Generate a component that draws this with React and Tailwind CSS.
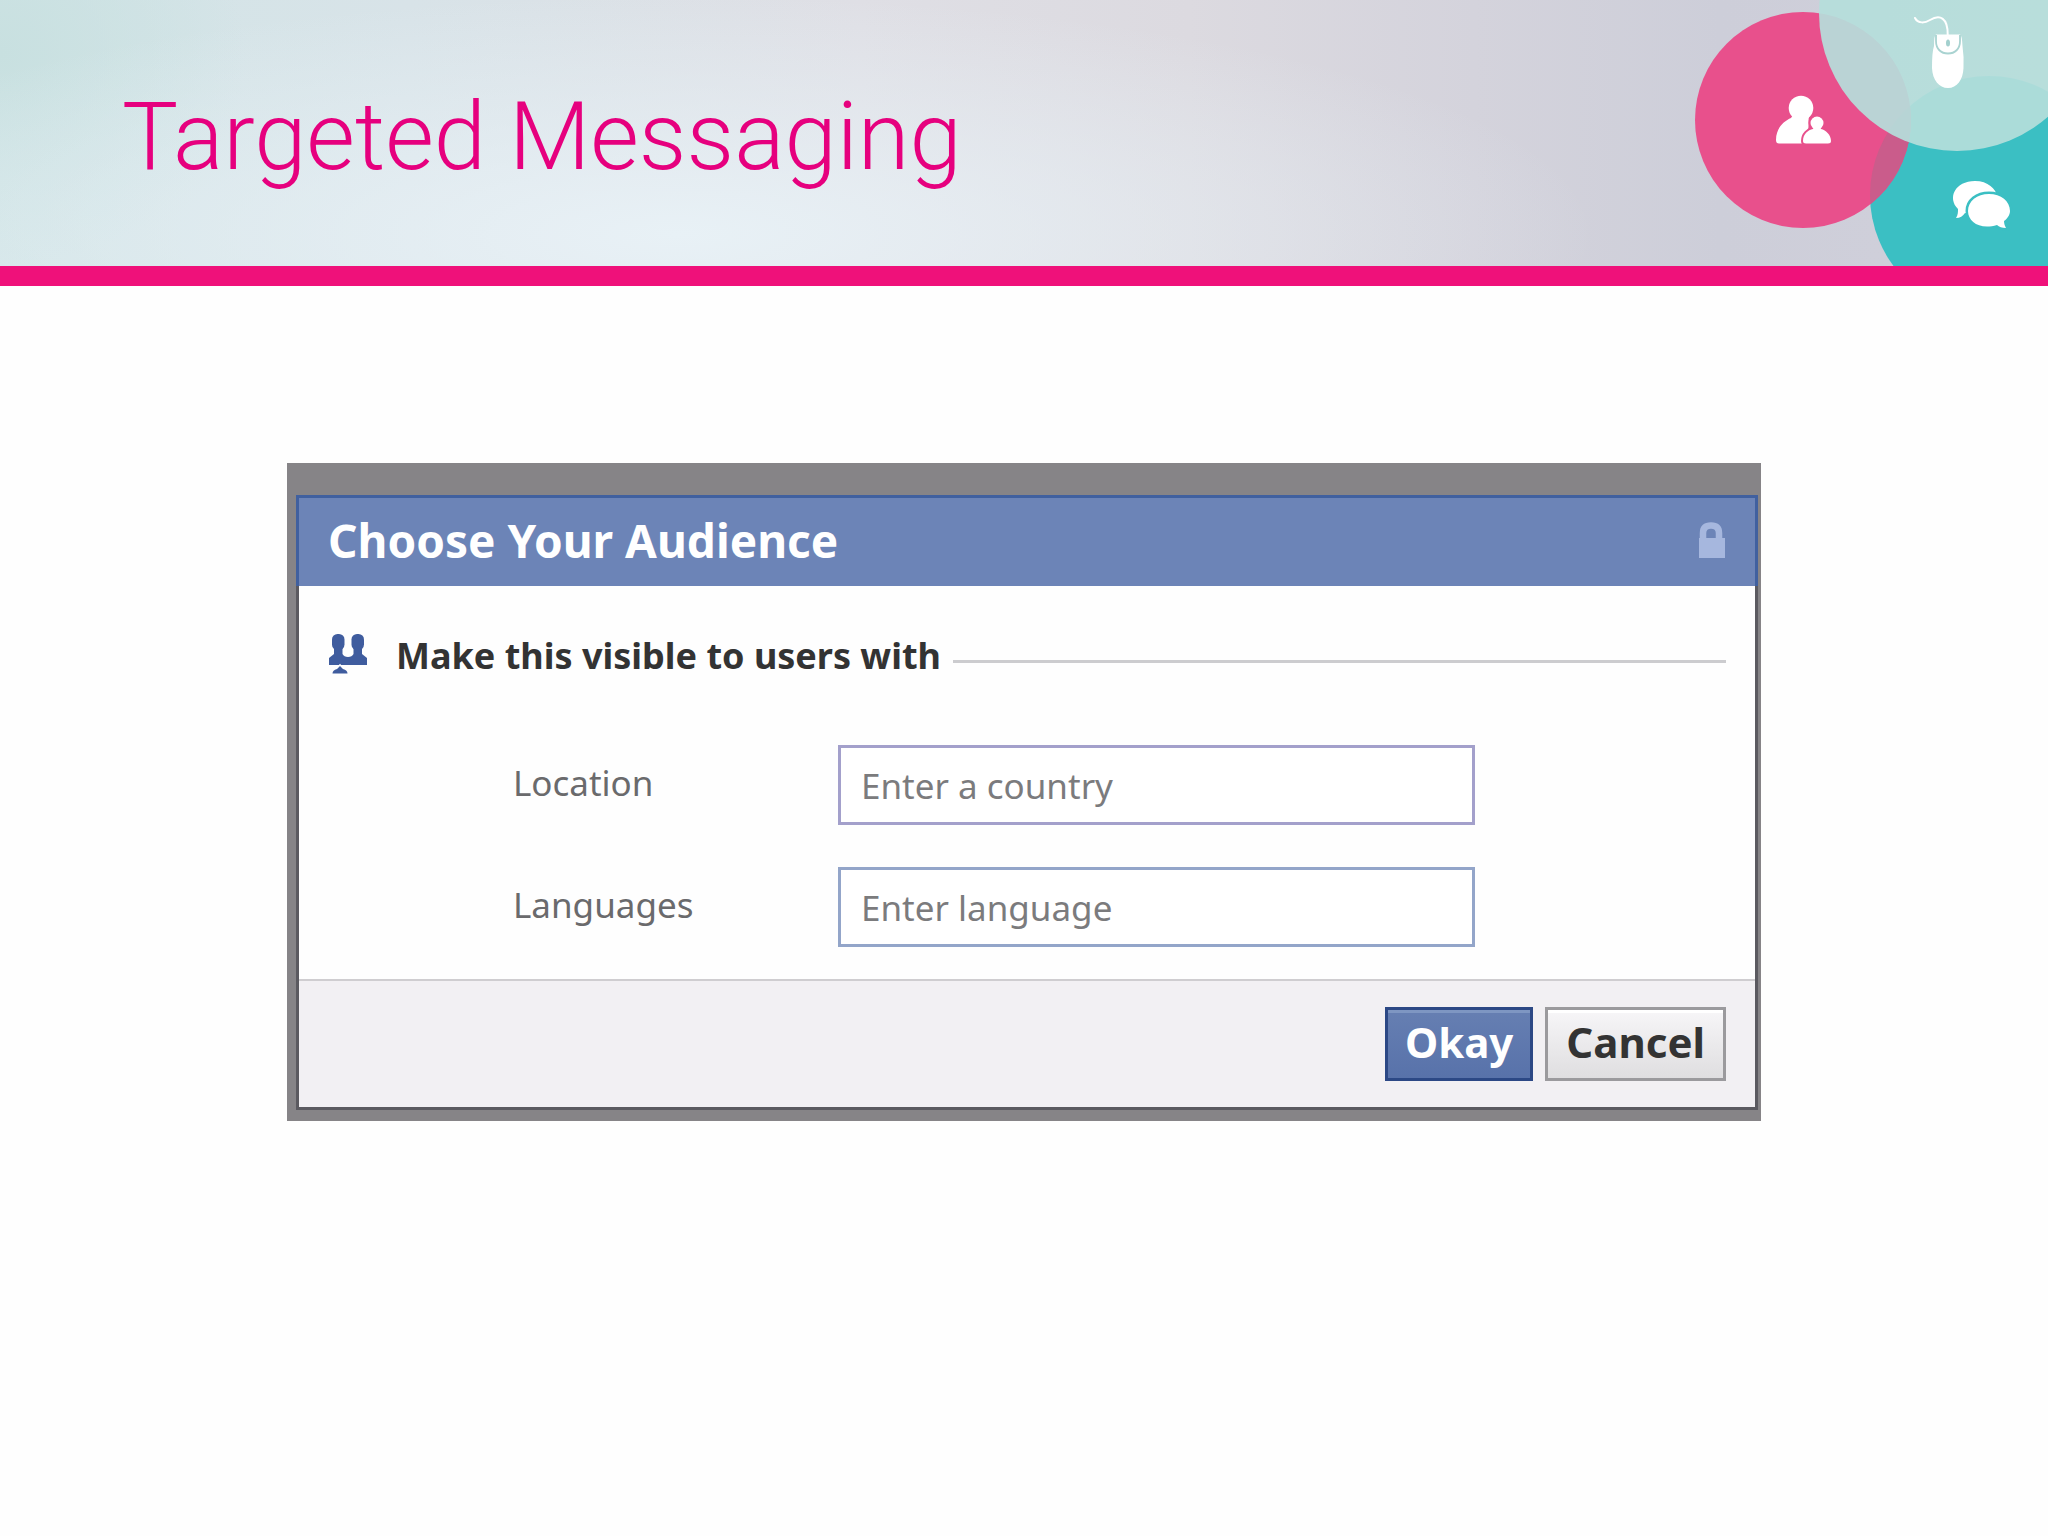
const fields = [
  { id: 'location', label: 'Location', placeholder: 'Enter a country', border: 'border-[#a3a0cb]' },
  { id: 'languages', label: 'Languages', placeholder: 'Enter language', border: 'border-[#93a5c9]' },
];

function HeaderArt() {
  return (
    <svg className="absolute top-0 right-0" width="388" height="266" viewBox="0 0 388 266" aria-hidden="true">
      <clipPath id="pink-circle">
        <circle cx="143" cy="120" r="108" />
      </clipPath>
      <circle cx="329" cy="195" r="119" fill="#3bbfc3" />
      <circle cx="143" cy="120" r="108" fill="#e8508c" />
      <circle cx="329" cy="195" r="119" fill="#ca5c8b" clipPath="url(#pink-circle)" />
      <circle cx="297" cy="13" r="138" fill="#b5dedb" opacity="0.92" />

      {/* Mouse */}
      <path d="M255 18 C258 24 265 23 270 20 C280 14 288 18 287.700 35" fill="none" stroke="#fff" strokeWidth="2" strokeLinecap="round" />
      <path d="M276 34.500 H300 Q302 35 302.500 46 Q304 56 303.500 68 C303 80 297 88 288 88 C279 88 272.500 80 272 68 Q272 52 274 46 Q274 35 276 34.500Z" fill="#fff" />
      <path d="M276 35 V41 C276 49 281 53.500 288 53.500 C295 53.500 300 49 300 41 V35" fill="none" stroke="#a9d3d1" strokeWidth="1.800" />
      <ellipse cx="288" cy="43" rx="2" ry="3.500" fill="#a3d0ce" />

      {/* People */}
      <g fill="#fff">
        <circle cx="141" cy="108" r="12.300" />
        <path d="M119 143.500 Q116 143.500 116 140 C116 128 124 121 131 118 Q133 116 133 112 H149 V117 C148 120 149 127 148 130 L142 143.500Z" />
        <g stroke="#e8508c" strokeWidth="4">
          <circle cx="157" cy="123" r="6.500" />
          <path d="M146 143.500 Q143 143.500 143 141 C143 134 148 130 153 129 L154 126 H160 L161 129 C166 130 171 135 171 141 Q171 143.500 168 143.500Z" />
        </g>
        <circle cx="157" cy="123" r="6.500" />
        <path d="M146 143.500 Q143 143.500 143 141 C143 134 148 130 153 129 L154 126 H160 L161 129 C166 130 171 135 171 141 Q171 143.500 168 143.500Z" />
      </g>

      {/* Speech bubbles */}
      <g fill="#fff">
        <path d="M315 181 C328 181 336 189 337 196 L320 212 C313 215 309 214 305 213 C303 216 300 218 296 218 C298 215 298 212 298 209 C287 198 295 181 315 181Z" />
        <path d="M329 194 C341 194 350 201 350 211 C350 215 347 219 344 221 C344 224 345 226 346 228 C342 228 339 227 337 225 C320 230 308 222 308 211 C308 201 317 194 329 194Z" stroke="#3bbfc3" strokeWidth="5" paintOrder="stroke" />
      </g>
    </svg>
  );
}

function LockIcon() {
  return (
    <svg width="27" height="37" viewBox="0 0 27 37" aria-hidden="true">
      <path d="M4 19 V11 Q4 3.500 12 3.500 Q20 3.500 20 11 V19" fill="none" stroke="#a6b7de" strokeWidth="6.500" />
      <path d="M0 16 H26 V36 H0Z" fill="#a6b7de" />
    </svg>
  );
}

function GroupIcon() {
  return (
    <svg width="40" height="40" viewBox="0 0 40 40" fill="#3f5c9e" aria-hidden="true">
      <rect x="4" y="0" width="12.500" height="16" rx="5.500" />
      <rect x="23.500" y="0" width="12.500" height="16" rx="5.500" />
      <path d="M6 12 H14.500 V20 Q16 23 20 23 Q24 23 25.500 20 V12 H34 V20 L39 24 V31 H1 V24 L6 20Z" />
      <path d="M12 32 L19 40 H4.500Z" stroke="#fefefe" strokeWidth="3" />
      <path d="M12 32 L15 35 Q19.500 36 19.500 39.500 H4.500 Q4.500 36 9 35Z" />
    </svg>
  );
}

export default function App() {
  return (
    <div className="min-h-screen bg-[#fefefe] font-['Noto_Sans',sans-serif]">
      <header className="relative border-b-20 border-[#ef117a] bg-[radial-gradient(ellipse_45%_90%_at_33%_88%,#e8f1f6_0%,#e8f1f600_100%),radial-gradient(ellipse_12%_80%_at_0%_20%,#c8e0e0_0%,#c8e0e000_100%),linear-gradient(to_right,#d2e5e7_0%,#d8e3e8_20%,#dfdfe5_42%,#dcdae0_58%,#d4d3dc_72%,#cdced9_84%,#d1d0db_100%)]">
        <div className="flex h-[266px] items-center pt-2 pl-[122px]">
          <h1 className="font-['Roboto',sans-serif] text-[94px] font-light text-[#e6007e]">Targeted Messaging</h1>
        </div>
        <HeaderArt />
      </header>

      <main className="px-8 pt-[177px] pb-16">
        <div className="mx-auto max-w-[1474px] bg-[#868487] pt-8 pr-[3px] pb-[11px] pl-[9px]">
          <form role="dialog" aria-labelledby="dialog-title" onSubmit={e => e.preventDefault()}>
            <div className="flex items-center justify-between border-x-3 border-t-3 border-[#40609f] bg-[#6c84b7] px-[29px] pt-[14px] pb-[18px]">
              <h2 id="dialog-title" className="text-[46px] leading-14 font-bold text-white">Choose Your Audience</h2>
              <LockIcon />
            </div>

            <div className="border-x-3 border-[#5b5a60] bg-[#fefefe] px-[29px] pt-11 pb-8">
              <div className="flex items-center">
                <GroupIcon />
                <h3 className="mt-1 ml-7 text-[36px] leading-11 font-bold text-[#333]">Make this visible to users with</h3>
                <div className="mt-[14px] ml-3 h-[3px] flex-1 bg-[#cccccf]" />
              </div>

              <div className="mt-[67px] ml-[185px] flex flex-col gap-[42px]">
                {fields.map(f => (
                  <div key={f.id} className="grid grid-cols-[325px_637px] items-center">
                    <label htmlFor={f.id} className="pb-1 text-[35px] leading-12 text-[#6a6a6c]">{f.label}</label>
                    <input
                      id={f.id}
                      type="text"
                      placeholder={f.placeholder}
                      className={`${f.border} h-20 border-3 bg-white px-5 text-[35px] text-[#555] outline-none placeholder:text-[#7b7b7d]`}
                    />
                  </div>
                ))}
              </div>
            </div>

            <div className="border-x-3 border-b-3 border-[#5b5a60] bg-[#f2f0f3]">
              <div className="flex justify-end gap-3 border-t-2 border-[#cfcdd0] px-[29px] py-[26px]">
                <button type="submit" className="h-[74px] border-3 border-[#2c4885] bg-linear-to-b from-[#667fb2] to-[#5872aa] px-[17px] pb-1 text-[42px] leading-12 font-bold text-white shadow-[inset_0_3px_0_#7e96c2]">
                  Okay
                </button>
                <button type="button" className="h-[74px] border-3 border-[#9b9a9d] bg-linear-to-b from-[#f7f6f8] to-[#dfdee0] px-[18px] pb-1 text-[42px] leading-12 font-bold text-[#333] shadow-[inset_0_3px_0_#fff]">
                  Cancel
                </button>
              </div>
            </div>
          </form>
        </div>
      </main>
    </div>
  );
}
